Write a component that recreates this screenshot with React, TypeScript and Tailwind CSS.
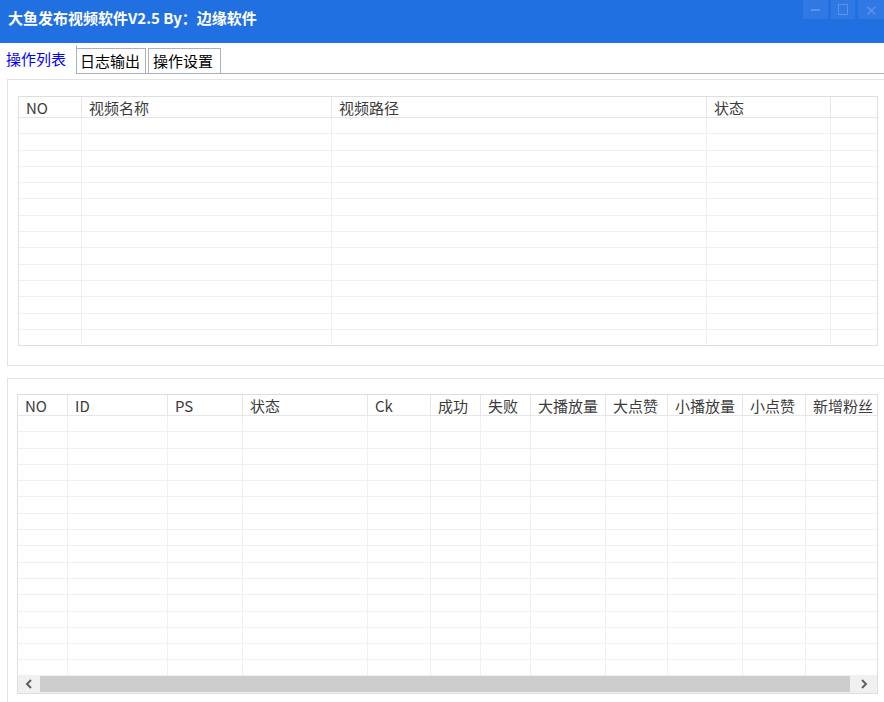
import React from 'react'

const topCols = [
  { name: 'NO', w: 63 },
  { name: '视频名称', w: 250 },
  { name: '视频路径', w: 375 },
  { name: '状态', w: 124 },
  { name: '', w: 47 },
]

const bottomCols = [
  { name: 'NO', w: 50 },
  { name: 'ID', w: 100 },
  { name: 'PS', w: 75 },
  { name: '状态', w: 125 },
  { name: 'Ck', w: 63 },
  { name: '成功', w: 50 },
  { name: '失败', w: 50 },
  { name: '大播放量', w: 75 },
  { name: '大点赞', w: 62 },
  { name: '小播放量', w: 75 },
  { name: '小点赞', w: 63 },
  { name: '新增粉丝', w: 72 },
]

function Grid({ cols, rows, bodyHeight }: { cols: { name: string; w: number }[]; rows: number; bodyHeight: number }) {
  return (
    <div className="flex flex-col">
      <div className="flex h-[21px] border-b border-[#e6e6e6] bg-white">
        {cols.map((c, i) => (
          <div
            key={i}
            style={{ width: c.w }}
            className="shrink-0 border-r border-[#e6e6e6] pl-[7px] text-[15px] leading-[22px] text-[#3c3c3c] last:border-r-0 whitespace-nowrap overflow-hidden"
          >
            {c.name}
          </div>
        ))}
      </div>
      <div className="flex flex-col overflow-hidden" style={{ height: bodyHeight }}>
        {Array.from({ length: rows }).map((_, r) => (
          <div key={r} className="flex h-[16.3px] shrink-0 border-b border-[#f0f0f0]">
            {cols.map((c, i) => (
              <div key={i} style={{ width: c.w }} className="shrink-0 border-r border-[#f0f0f0] last:border-r-0" />
            ))}
          </div>
        ))}
      </div>
    </div>
  )
}

export default function App() {
  return (
    <div
      className="w-[884px] h-[702px] overflow-hidden bg-white flex flex-col"
      style={{ fontFamily: '"Noto Sans CJK SC", "Noto Sans", sans-serif' }}
    >
      {/* title bar */}
      <div className="h-[43px] shrink-0 bg-[#2170e2] flex justify-between">
        <div className="pl-[8px] pt-[6px] text-[15px] font-bold text-white leading-[24px]">
          大鱼发布视频软件V2.5 By：边缘软件
        </div>
        <div className="flex gap-[3px] h-[19px]">
          <div className="w-[25px] bg-[#3079e4] flex items-center justify-center">
            <div className="w-[9px] h-[2px] bg-[#5a94ea]" />
          </div>
          <div className="w-[24px] bg-[#3079e4] flex items-center justify-center">
            <div className="w-[10px] h-[11px] border border-[#5a94ea]" />
          </div>
          <div className="w-[26px] bg-[#3079e4] flex items-center justify-center text-[#5a94ea] text-[15px] leading-none">
            ✕
          </div>
        </div>
      </div>

      {/* tabs */}
      <div className="h-[31px] shrink-0 flex items-end border-b border-[#a9b1bb] pl-0">
        <div className="h-[29px] w-[77px] bg-white border-r border-[#a9b1bb] -mb-px text-[15px] text-[#0000ff] leading-[27px] pl-[6px]">
          操作列表
        </div>
        <div className="h-[25px] w-[69px] border-t border-r border-[#a9b1bb] text-[15px] text-black leading-[23px] pl-[3px]">
          日志输出
        </div>
        <div className="h-[25px] w-[73px] ml-[2px] border-t border-l border-r border-[#a9b1bb] text-[15px] text-black leading-[23px] pl-[4px]">
          操作设置
        </div>
      </div>

      {/* content */}
      <div className="flex flex-col pl-[7px] pt-[5px]">
        <div className="h-[287px] border border-r-0 border-[#e3e3e3] pl-[10px] pt-[16px]">
          <div className="w-[860px] border border-[#dedede]">
            <Grid cols={topCols} rows={14} bodyHeight={227} />
          </div>
        </div>

        <div className="mt-[12px] h-[325px] border border-r-0 border-[#e3e3e3] pl-[9px] pt-[15px]">
          <div className="w-[861px] border border-[#dedede] flex flex-col">
            <Grid cols={bottomCols} rows={17} bodyHeight={259} />
            <div className="h-[18px] flex bg-[#f0f0f0]">
              <div className="w-[22px] flex items-center justify-center">
                <svg width="8" height="10" viewBox="0 0 8 10">
                  <path d="M6 1 L2 5 L6 9" stroke="#606060" strokeWidth="2" fill="none" />
                </svg>
              </div>
              <div className="flex-1 bg-[#cdcdcd] my-[1px]" />
              <div className="w-[27px] flex items-center justify-center">
                <svg width="8" height="10" viewBox="0 0 8 10">
                  <path d="M2 1 L6 5 L2 9" stroke="#606060" strokeWidth="2" fill="none" />
                </svg>
              </div>
            </div>
          </div>
        </div>
      </div>
    </div>
  )
}
